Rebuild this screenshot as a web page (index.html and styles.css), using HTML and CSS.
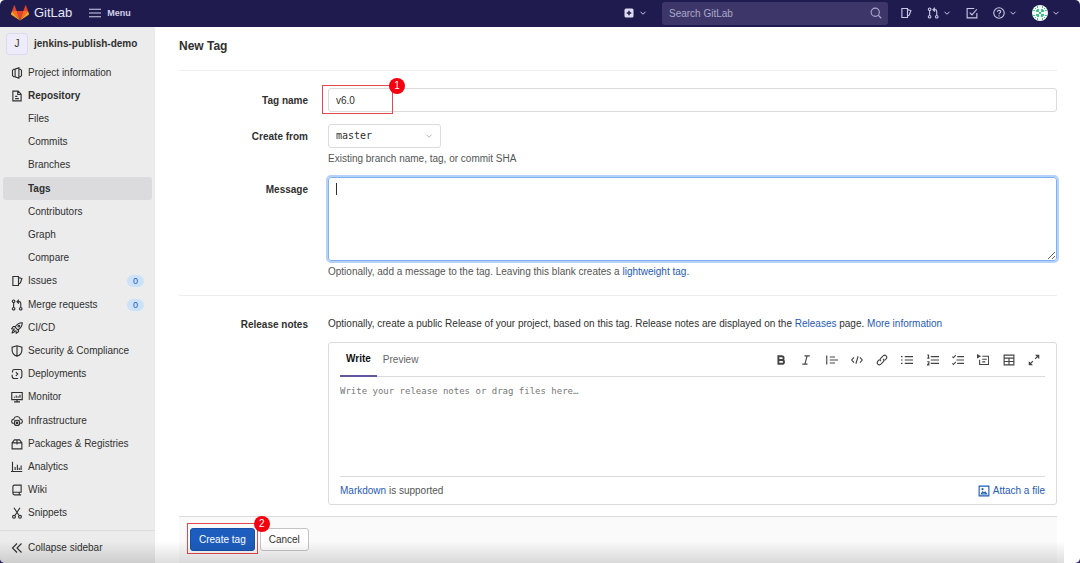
FILE: index.html
```html
<!DOCTYPE html>
<html lang="en">
<head>
  <meta charset="utf-8">
  <title>New Tag · jenkins-publish-demo · GitLab</title>
  <link rel="stylesheet" href="styles.css">
</head>
<body>
  <!-- icon sprite -->
  <svg class="sprite" aria-hidden="true">
    <symbol id="chevron" viewBox="0 0 16 16"><path d="M3 5.500l5 5 5-5"/></symbol>
    <symbol id="project" viewBox="0 0 16 16"><path d="M5.500 3H3.500L2 4.500v7L3.500 13H5.500M5.500 2.800L10.500 1v14l-5-1.800zM10.500 3H12.500L14 4.500v7L12.500 13H10.500"/></symbol>
    <symbol id="doc" viewBox="0 0 16 16"><path d="M3 1.500h6.500l4 4V14.500H2.500V1.500zM9 1.500V6h4.500M5.500 8.500h3M5.500 11.500h5"/></symbol>
    <symbol id="issues" viewBox="0 0 16 16"><path d="M2.500 2h7.500v12H2.500zM10 3.500l4.500 1.200-2 5.800L10 12"/></symbol>
    <symbol id="merge" viewBox="0 0 16 16"><circle cx="3.500" cy="3" r="1.700"/><circle cx="3.500" cy="13" r="1.700"/><circle cx="13" cy="13" r="1.700"/><path d="M3.500 5v6M13 11V6q0-2.500-2.500-2.500H8.500M10.500 1L8 3.500 10.500 6"/></symbol>
    <symbol id="rocket" viewBox="0 0 16 16"><path d="M15 1c-5 0-7.500 2-9.500 6L9 10.500c4-2 6-4.500 6-9.500zM6 6H3L1 9l4 .5M10 10v3l-3 2-.5-4M4.500 10.500C2 11 1.500 14.500 1.500 14.500S5 14 5.500 11.500"/><circle cx="10.500" cy="5.500" r="1.200"/></symbol>
    <symbol id="shield" viewBox="0 0 16 16"><path d="M8 1L1.500 3v4c0 4 2.500 6.500 6.500 8 4-1.500 6.500-4 6.500-8V3zM8 1v14"/></symbol>
    <symbol id="deploy" viewBox="0 0 16 16"><path d="M2 6V4.500Q2 2 4.500 2H12q2.500 0 2.500 2.500V11q0 2.500-2.500 2.500M9.500 14H4.500Q1.500 14 1.500 11V9M6.500 5.500L9 8l-2.500 2.500"/></symbol>
    <symbol id="monitor" viewBox="0 0 16 16"><path d="M1 2h14v9.500H1zM4 14.500h8M8 11.500v3M4.500 7.500V9M7 6v3M9.500 7v2M12 5v4"/></symbol>
    <symbol id="cloud" viewBox="0 0 16 16"><path d="M3.500 11.500C1.500 11 .8 9.500.8 8.500c0-2 1.700-2.800 2.700-3C4.500 3 6 2 8 2s3.500 1 4.500 3.500c1 .2 2.700 1 2.700 3 0 1-.7 2.500-2.700 3"/><circle cx="8" cy="10.500" r="3.500"/><circle cx="8" cy="10.500" r="1"/><path d="M6 7.500L4.500 6.500M10 7.500l1.500-1"/></symbol>
    <symbol id="package" viewBox="0 0 16 16"><path d="M1.500 6.500h13v8h-13zM1.500 6.500L4.500 2.500h7l3 4M8 2.500v6"/></symbol>
    <symbol id="chart" viewBox="0 0 16 16"><path d="M2 1v13h13M0 14h2M5.500 8v4M8.500 5v7M11 9v3M13.500 6v6"/></symbol>
    <symbol id="book" viewBox="0 0 16 16"><path d="M13.500 11.500V1.500H4.500q-2 0-2 2V12q0 2.500 2 2.500h9M2.500 12q0-1 2-1h9M11 11.500v3"/></symbol>
    <symbol id="snippet" viewBox="0 0 16 16"><path d="M4 1l6.500 10M12 1L5.500 11"/><circle cx="4" cy="13" r="1.900"/><circle cx="12" cy="13" r="1.900"/></symbol>
    <symbol id="collapse" viewBox="0 0 16 16"><path d="M8 2L2 8l6 6M14 2L8 8l6 6"/></symbol>
    <symbol id="search" viewBox="0 0 16 16"><circle cx="7" cy="7" r="5.500"/><path d="M11 11l4 4"/></symbol>
    <symbol id="todo" viewBox="0 0 16 16"><path d="M11 2H1.500v12.500h13V8M5 7.500l3 3L14.500 3"/></symbol>
    <symbol id="help" viewBox="0 0 16 16"><circle cx="8" cy="8" r="7"/><path d="M5.800 6.300C6 4 10.300 4 10.300 6.300 10.300 7.800 8 7.800 8 9.500M8 11v1.500"/></symbol>
    <symbol id="bold" viewBox="0 0 16 16"><path class="thick" d="M4.500 3h4.500q2.500 0 2.500 2.500T9 8H4.500zM4.500 8h5Q12 8 12 10.500T9.500 13h-5z"/></symbol>
    <symbol id="italic" viewBox="0 0 16 16"><path d="M6 2.500h7M3 13.500h7M9.500 2.500l-3 11"/></symbol>
    <symbol id="quote" viewBox="0 0 16 16"><path d="M1 2v12M5 4h7M5 8h11M5 12h7"/></symbol>
    <symbol id="code" viewBox="0 0 16 16"><path d="M4 4.500L1 8l3 3.500M12 4.500L15 8l-3 3.500M9.500 3l-3 10"/></symbol>
    <symbol id="link" viewBox="0 0 16 16"><path d="M6.500 9.500c-1.500-1.500-1-3 0-4l3-3c3-2.500 6.500 1 4 4l-2 2M9.500 6.500c1.500 1.500 1 3 0 4l-3 3c-3 2.500-6.500-1-4-4l2-2"/></symbol>
    <symbol id="bullets" viewBox="0 0 16 16"><path d="M0 3.500h2M0 8h2M0 12.500h2M5 3.500h11M5 8h11M5 12.500h11"/></symbol>
    <symbol id="numbers" viewBox="0 0 16 16"><path d="M5 3.500h11M5 8h11M5 12.500h11M.5 1.500h1.500v4M.3 5.500h3M.3 10.300h2.300v2l-2 2.200h2.700"/></symbol>
    <symbol id="tasks" viewBox="0 0 16 16"><path d="M7 3.500h9M6 8h10M7 12.500h9M.5 3.500l1.500 1.500L5 1.500M.5 12.500L2 14l3-3.500"/></symbol>
    <symbol id="details" viewBox="0 0 16 16"><path d="M7 3h8.500v11H3.500V7.500M7 7h6M7 10.500h4"/><path class="solid" d="M0 0l5.500 3L0 6z"/></symbol>
    <symbol id="table" viewBox="0 0 16 16"><path d="M1.500 1.500h13v13h-13zM1.500 5.500h13M1.500 10h13M8 5.500v9"/></symbol>
    <symbol id="expand" viewBox="0 0 16 16"><path d="M10.500 2H14v3.500M14 2L9.500 6.500M5.500 14H2v-3.500M2 14l4.500-4.500"/><path class="solid" d="M9.500 1H15v5.500zM6.500 15H1V9.500z"/></symbol>
    <symbol id="image" viewBox="0 0 16 16"><path d="M1.500 1.500h13v13h-13zM4.500 12h7L9.500 9.500l-1.500 1L6 9z"/><circle cx="6" cy="5.500" r=".7"/></symbol>
  </svg>

  <header class="navbar">
    <a class="brand" href="#">
      <svg class="logo" viewBox="0 0 36 32" aria-hidden="true">
        <path fill="#e24329" d="M18 31l6.600-19H11.400z"/>
        <path fill="#fc6d26" d="M18 31l-6.600-19H2z"/>
        <path fill="#fca326" d="M2 12L0 18c-.2.600 0 1.200.5 1.500L18 31z"/>
        <path fill="#e24329" d="M2 12h9.400L7.400 1c-.2-.6-1.100-.6-1.300 0z"/>
        <path fill="#fc6d26" d="M18 31l6.600-19H34z"/>
        <path fill="#fca326" d="M34 12l2 6c.2.600 0 1.200-.5 1.500L18 31z"/>
        <path fill="#e24329" d="M34 12h-9.400l4-11c.2-.6 1.100-.6 1.300 0z"/>
      </svg>
      <span>GitLab</span>
    </a>
    <button class="menu-btn" type="button">
      <svg class="icon" viewBox="0 0 16 16"><path d="M0 3h16M0 8h16M0 13h16"/></svg>
      Menu
    </button>
    <div class="nav-right">
      <button class="nav-btn" type="button" aria-label="Create new">
        <svg class="icon" viewBox="0 0 16 16"><rect class="plus-bg" x="2" y="2" width="12" height="12" rx="2"/><path class="plus" d="M8 5v6M5 8h6"/></svg>
        <svg class="icon tiny"><use href="#chevron"/></svg>
      </button>
      <form class="search">
        <input type="text" placeholder="Search GitLab" aria-label="Search GitLab">
        <svg class="icon"><use href="#search"/></svg>
      </form>
      <a class="nav-btn" href="#" aria-label="Issues"><svg class="icon"><use href="#issues"/></svg></a>
      <button class="nav-btn" type="button" aria-label="Merge requests"><svg class="icon"><use href="#merge"/></svg><svg class="icon tiny"><use href="#chevron"/></svg></button>
      <a class="nav-btn" href="#" aria-label="To-Do List"><svg class="icon"><use href="#todo"/></svg></a>
      <button class="nav-btn" type="button" aria-label="Help"><svg class="icon"><use href="#help"/></svg><svg class="icon tiny"><use href="#chevron"/></svg></button>
      <button class="nav-btn" type="button" aria-label="User menu">
        <svg class="user-avatar" viewBox="0 0 16 16"><circle cx="8" cy="8" r="8" fill="#f4fbf7"/><path fill="#3fc487" d="M5 4h2v3H4V5h1zM9 4h2v1h1v2H9zM4 9h3v3H5v-1H4zM9 9h3v2h-1v1H9zM7 7h2v2H7zM5 1h1v2H5zM10 1h1v2h-1zM5 13h1v2H5zM10 13h1v2h-1zM1 5h2v1H1zM1 10h2v1H1zM13 5h2v1h-2zM13 10h2v1h-2zM3 3h1v1H3zM12 3h1v1h-1zM3 12h1v1H3zM12 12h1v1h-1z"/></svg>
        <svg class="icon tiny"><use href="#chevron"/></svg>
      </button>
    </div>
  </header>

  <div class="page">
    <aside class="sidebar">
      <a class="project" href="#"><span class="project-avatar">J</span>jenkins-publish-demo</a>
      <nav class="side-nav">
        <a href="#"><svg class="icon"><use href="#project"/></svg>Project information</a>
        <a class="bold" href="#"><svg class="icon"><use href="#doc"/></svg>Repository</a>
        <a class="sub" href="#">Files</a>
        <a class="sub" href="#">Commits</a>
        <a class="sub" href="#">Branches</a>
        <a class="sub bold active" href="#">Tags</a>
        <a class="sub" href="#">Contributors</a>
        <a class="sub" href="#">Graph</a>
        <a class="sub" href="#">Compare</a>
        <a href="#"><svg class="icon"><use href="#issues"/></svg>Issues<span class="count">0</span></a>
        <a href="#"><svg class="icon"><use href="#merge"/></svg>Merge requests<span class="count">0</span></a>
        <a href="#"><svg class="icon"><use href="#rocket"/></svg>CI/CD</a>
        <a href="#"><svg class="icon"><use href="#shield"/></svg>Security &amp; Compliance</a>
        <a href="#"><svg class="icon"><use href="#deploy"/></svg>Deployments</a>
        <a href="#"><svg class="icon"><use href="#monitor"/></svg>Monitor</a>
        <a href="#"><svg class="icon"><use href="#cloud"/></svg>Infrastructure</a>
        <a href="#"><svg class="icon"><use href="#package"/></svg>Packages &amp; Registries</a>
        <a href="#"><svg class="icon"><use href="#chart"/></svg>Analytics</a>
        <a href="#"><svg class="icon"><use href="#book"/></svg>Wiki</a>
        <a href="#"><svg class="icon"><use href="#snippet"/></svg>Snippets</a>
      </nav>
      <button class="collapse-btn" type="button"><svg class="icon"><use href="#collapse"/></svg>Collapse sidebar</button>
    </aside>

    <main class="content">
      <h1>New Tag</h1>
      <form class="tag-form">
        <div class="section">
          <div class="row">
            <label for="tag_name">Tag name</label>
            <div class="field">
              <input class="control" id="tag_name" type="text" value="v6.0">
              <div class="mark mark-name"><span class="mark-number">1</span></div>
            </div>
          </div>
          <div class="row">
            <label for="ref">Create from</label>
            <div class="field">
              <div class="select-wrap">
                <select class="control" id="ref"><option>master</option></select>
                <svg class="icon tiny"><use href="#chevron"/></svg>
              </div>
              <p class="hint">Existing branch name, tag, or commit SHA</p>
            </div>
          </div>
          <div class="row">
            <label for="message">Message</label>
            <div class="field">
              <textarea class="control message" id="message"></textarea>
              <span class="caret"></span>
              <p class="hint">Optionally, add a message to the tag. Leaving this blank creates a <a href="#">lightweight tag.</a></p>
            </div>
          </div>
        </div>

        <div class="section notes">
          <div class="row">
            <label for="release_notes">Release notes</label>
            <div class="field">
              <p class="notes-text">Optionally, create a public Release of your project, based on this tag. Release notes are displayed on the <a href="#">Releases</a> page. <a href="#">More information</a></p>
              <div class="editor">
                <div class="editor-head">
                  <button class="tab selected" type="button">Write</button>
                  <button class="tab" type="button">Preview</button>
                  <div class="toolbar">
                    <button type="button" aria-label="Bold"><svg class="icon"><use href="#bold"/></svg></button>
                    <button type="button" aria-label="Italic"><svg class="icon"><use href="#italic"/></svg></button>
                    <button type="button" aria-label="Quote"><svg class="icon"><use href="#quote"/></svg></button>
                    <button type="button" aria-label="Code"><svg class="icon"><use href="#code"/></svg></button>
                    <button type="button" aria-label="Link"><svg class="icon"><use href="#link"/></svg></button>
                    <button type="button" aria-label="Bullet list"><svg class="icon"><use href="#bullets"/></svg></button>
                    <button type="button" aria-label="Numbered list"><svg class="icon"><use href="#numbers"/></svg></button>
                    <button type="button" aria-label="Task list"><svg class="icon"><use href="#tasks"/></svg></button>
                    <button type="button" aria-label="Collapsible section"><svg class="icon"><use href="#details"/></svg></button>
                    <button type="button" aria-label="Table"><svg class="icon"><use href="#table"/></svg></button>
                    <button type="button" aria-label="Full screen"><svg class="icon"><use href="#expand"/></svg></button>
                  </div>
                </div>
                <textarea id="release_notes" placeholder="Write your release notes or drag files here…"></textarea>
                <div class="editor-foot">
                  <span><a href="#">Markdown</a> is supported</span>
                  <button class="attach" type="button"><svg class="icon"><use href="#image"/></svg>Attach a file</button>
                </div>
              </div>
            </div>
          </div>
        </div>

        <div class="form-actions">
          <div class="submit">
            <button class="btn btn-confirm" type="submit">Create tag</button>
            <div class="mark mark-submit"><span class="mark-number">2</span></div>
          </div>
          <a class="btn" href="#">Cancel</a>
        </div>
      </form>
    </main>
  </div>
  <div class="bottom-shade"></div>
</body>
</html>
```
FILE: styles.css
```css
* {
  box-sizing: border-box;
}

html {
  background: linear-gradient(#fff 50%, #32246e 50%);
}

body {
  margin: 0;
  min-height: 100vh;
  display: flex;
  flex-direction: column;
  background: #fff;
  border-radius: 5px;
  overflow: hidden;
  color: #303030;
  font-family: "Liberation Sans", Arial, sans-serif;
  font-size: 10px;
  line-height: 14px;
}

a {
  color: #1f5bb5;
  text-decoration: none;
}

button,
input,
select,
textarea {
  font: inherit;
  color: inherit;
}

button {
  padding: 0;
  border: none;
  background: none;
  cursor: pointer;
}

p {
  margin: 0;
}

.sprite {
  display: none;
}

.icon {
  display: block;
  flex: none;
  width: 12px;
  height: 12px;
  fill: none;
  stroke: currentColor;
  stroke-width: 1.5;
}

.tiny {
  width: 8px;
  height: 8px;
  stroke-width: 2;
}

.thick {
  stroke-width: 2.5;
}

.solid {
  fill: currentColor;
  stroke: none;
}

/* top bar */

.navbar {
  display: flex;
  align-items: center;
  height: 27px;
  padding: 0 20px 1px 11px;
  background: #1f1b4f;
  color: #d1d0e8;
}

.brand {
  display: flex;
  align-items: center;
  gap: 5px;
  color: #e6e5f5;
  font-size: 13px;
}

.logo {
  width: 18px;
  height: 16px;
}

.menu-btn {
  display: flex;
  align-items: center;
  gap: 6px;
  margin-left: 17px;
  font-size: 9px;
  font-weight: 600;
}

.nav-right {
  display: flex;
  align-items: center;
  gap: 15px;
  margin-left: auto;
}

.nav-btn {
  display: flex;
  align-items: center;
  gap: 4px;
  color: #c9c7e5;
}

.plus-bg {
  fill: #dddcf0;
  stroke: none;
}

.plus {
  stroke: #1f1b4f;
  stroke-width: 2;
}

.search {
  position: relative;
  width: 226px;
  margin-right: -3px;
}

.search input {
  display: block;
  width: 100%;
  height: 23px;
  padding: 0 24px 0 7px;
  border: none;
  border-radius: 3px;
  background: #3d3769;
}

.search input::placeholder {
  color: #aaa7ca;
}

.search .icon {
  position: absolute;
  top: 5px;
  right: 6px;
  color: #aaa7ca;
}

.user-avatar {
  width: 16px;
  height: 16px;
}

/* sidebar */

.page {
  flex: 1;
  display: flex;
}

.sidebar {
  flex: none;
  width: 155px;
  display: flex;
  flex-direction: column;
  background: #ececec;
}

.project {
  display: flex;
  align-items: center;
  gap: 6px;
  height: 34px;
  padding: 0 6px;
  color: #303030;
  font-weight: 600;
}

.project-avatar {
  width: 22px;
  height: 22px;
  border: 1px solid #dcdaf0;
  border-radius: 3px;
  background: #eeecfa;
  font-weight: 400;
  line-height: 20px;
  text-align: center;
}

.side-nav {
  flex: 1;
  display: flex;
  flex-direction: column;
  padding: 0 3px 5px;
}

.side-nav a {
  flex: 1;
  display: flex;
  align-items: center;
  gap: 5px;
  padding: 0 8px;
  border-radius: 3px;
  color: #303030;
}

.side-nav .sub {
  padding-left: 25px;
}

.side-nav .bold {
  font-weight: 600;
}

.side-nav .active {
  background: #dbdbde;
}

.count {
  width: 17px;
  margin-left: auto;
  border-radius: 6px;
  background: #cbe2f9;
  color: #1f5bb5;
  font-size: 9px;
  line-height: 12px;
  text-align: center;
}

.collapse-btn {
  display: flex;
  align-items: center;
  gap: 5px;
  height: 33px;
  padding: 1px 11px 0;
  border-top: 1px solid #dbdbdb;
}

/* new tag form */

.content {
  flex: 1;
  min-width: 0;
  display: flex;
  flex-direction: column;
  padding: 0 23px 0 24px;
}

h1 {
  margin: 0;
  padding: 11px 0 16px;
  font-size: 12px;
  font-weight: 600;
  line-height: 16px;
}

.tag-form {
  flex: 1;
  display: flex;
  flex-direction: column;
}

.section {
  display: flex;
  flex-direction: column;
  gap: 12px;
  padding: 17px 0;
  border-top: 1px solid #eee;
}

.row {
  display: grid;
  grid-template-columns: 129px 1fr;
  column-gap: 20px;
}

.row label {
  padding-top: 6px;
  font-weight: 600;
  text-align: right;
}

.field {
  position: relative;
  min-width: 0;
}

.control {
  display: block;
  width: 100%;
  height: 24px;
  padding: 0 7px;
  border: 1px solid #dbdbdb;
  border-radius: 3px;
  background: #fff;
}

.select-wrap {
  position: relative;
  width: 113px;
}

.select-wrap .control {
  appearance: none;
  font-family: "DejaVu Sans Mono", monospace;
}

.select-wrap .icon {
  position: absolute;
  top: 8px;
  right: 8px;
  color: #999;
  stroke-width: 1.5;
}

.hint {
  padding-top: 5px;
  color: #555;
  line-height: 12px;
}

.message {
  height: 84px;
  padding: 6px 7px;
  border-color: #80b0f0;
  outline: 2px solid #b5d2fa;
  resize: vertical;
}

.caret {
  position: absolute;
  top: 6px;
  left: 8px;
  width: 1px;
  height: 12px;
  background: #303030;
}

.notes {
  padding: 16px 0 11px;
}

.notes-text {
  padding: 5px 0 11px;
}

.editor {
  padding: 0 11px;
  border: 1px solid #dbdbdb;
  border-radius: 3px;
}

.editor-head {
  display: flex;
  height: 34px;
  border-bottom: 1px solid #dbdbdb;
}

.tab {
  height: 34px;
  padding: 0 6px;
  color: #666;
}

.tab.selected {
  border-bottom: 2px solid #6459a0;
  color: #111;
  font-weight: 600;
}

.toolbar {
  display: flex;
  align-items: center;
  justify-content: space-between;
  width: 265px;
  margin-left: auto;
  margin-right: 5px;
  color: #444;
}

.editor textarea {
  display: block;
  width: 100%;
  height: 100px;
  padding: 7px 0;
  border: none;
  border-bottom: 1px solid #dbdbdb;
  font-family: "DejaVu Sans Mono", monospace;
  font-size: 9px;
  resize: none;
}

.editor textarea::placeholder {
  color: #777;
}

.editor-foot {
  display: flex;
  align-items: center;
  justify-content: space-between;
  height: 27px;
  color: #555;
}

.attach {
  display: flex;
  align-items: center;
  gap: 3px;
  color: #1f5bb5;
}

.form-actions {
  flex: 1;
  display: flex;
  align-items: flex-start;
  gap: 5px;
  padding: 11px;
  border-top: 1px solid #dbdbdb;
  background: #fafafa;
}

.btn {
  display: block;
  height: 23px;
  padding: 0 8px;
  border: 1px solid #c4c4c4;
  border-radius: 3px;
  background: #fff;
  color: #303030;
  line-height: 21px;
}

.btn-confirm {
  border-color: #1650a8;
  background: #1d5dbd;
  color: #fff;
}

.submit {
  position: relative;
}

/* numbered red boxes over the form */

.mark {
  position: absolute;
  border: 1px solid #e5484d;
  pointer-events: none;
}

.mark-name {
  top: -3px;
  left: -6px;
  width: 71px;
  height: 29px;
}

.mark-submit {
  inset: -5px -3px -3px;
}

.mark-number {
  position: absolute;
  top: -8px;
  right: -13px;
  width: 16px;
  height: 16px;
  border-radius: 50%;
  background: #f5000f;
  color: #fff;
  line-height: 16px;
  text-align: center;
}

.bottom-shade {
  position: fixed;
  right: 16px;
  bottom: 0;
  left: 0;
  height: 22px;
  background: linear-gradient(rgba(0, 0, 0, 0), rgba(0, 0, 0, 0.13));
  pointer-events: none;
}
```
